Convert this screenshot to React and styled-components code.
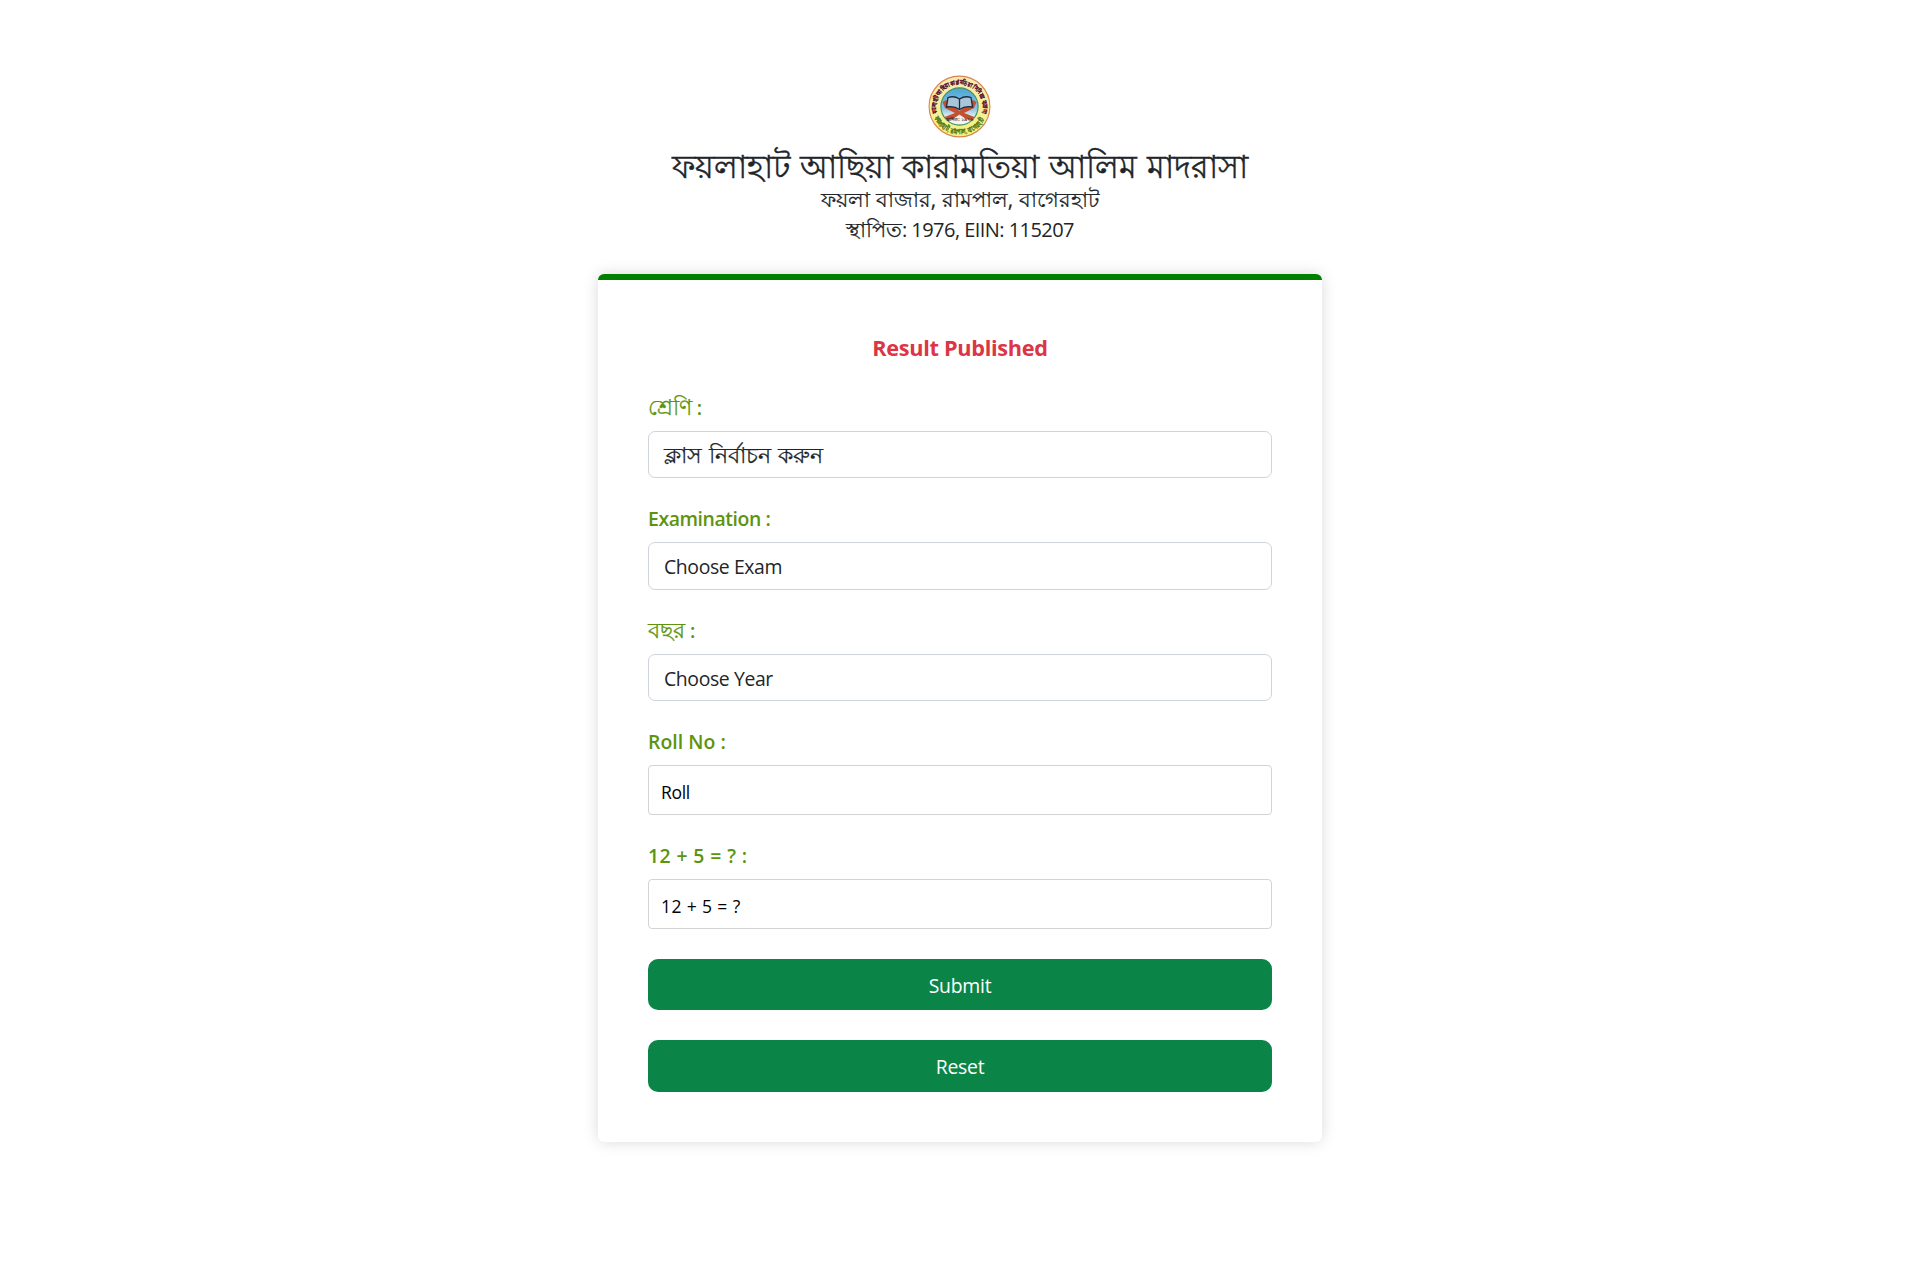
import React from "react";
import styled, { createGlobalStyle } from "styled-components";

const GlobalStyle = createGlobalStyle`
  * { box-sizing: border-box; }
  body {
    margin: 0;
    background: #fff;
    color: #212529;
    font-family: "Open Sans", "Noto Sans", sans-serif;
  }
`;

const Page = styled.main`
  display: flex;
  flex-direction: column;
  align-items: center;
  min-height: 100vh;
  padding: 75px 0 100px;
`;

const Header = styled.header`
  display: flex;
  flex-direction: column;
  align-items: center;
  height: 199px;
  white-space: nowrap;
`;

const Logo = styled.svg`
  display: block;
  width: 63px;
  height: 63px;
  flex: none;
  overflow: visible;
`;

const SchoolName = styled.h1`
  margin: 8px 0 0;
  font-size: 32.4px;
  font-weight: 400;
  line-height: 38px;
  word-spacing: 1.4px;
  -webkit-text-stroke: 0.4px currentColor;
`;

const Address = styled.p`
  margin: 0;
  font-size: 20.9px;
  line-height: 30px;
  -webkit-text-stroke: 0.2px currentColor;
`;

const Established = styled.p`
  margin: 1px 0 0;
  font-size: 20px;
  line-height: 30px;
  letter-spacing: -0.55px;
`;

const Bangla = styled.span`
  font-size: ${(p) => p.$size}px;
  font-weight: 400;
  line-height: 0;
  letter-spacing: 0;
  word-spacing: ${(p) => p.$gap || 0}px;
  -webkit-text-stroke: 0.25px currentColor;
`;

const Card = styled.section`
  width: 724px;
  padding: 51.6px 50px 50px;
  border-top: 6px solid #008000;
  border-radius: 6px;
  background: #fff;
  box-shadow: 0 0 15px rgba(0, 0, 0, 0.15);
`;

const Notice = styled.h2`
  margin: 0 0 29.2px;
  font-size: 21.7px;
  font-weight: 700;
  line-height: 32px;
  letter-spacing: -0.3px;
  text-align: center;
  color: #dc3545;
`;

const Form = styled.form`
  display: flex;
  flex-direction: column;
`;

const Field = styled.div`
  display: flex;
  flex-direction: column;
  gap: 8px;
  margin-bottom: ${(p) => p.$after || 26}px;
`;

const Label = styled.label`
  height: 30px;
  font-size: 19.4px;
  font-weight: 600;
  line-height: 30px;
  letter-spacing: ${(p) => p.$track || 0}px;
  color: #5c940d;
`;

const SelectBox = styled.div`
  height: 47.5px;
  padding: 1px 15px 0;
  border: 1px solid #ced4da;
  border-radius: 7px;
  font-size: 19.4px;
  line-height: 45px;
  letter-spacing: -0.38px;
`;

const Input = styled.input`
  width: 100%;
  height: 50px;
  padding: 3px 12px 0;
  border: 1px solid #d3d3d3;
  border-radius: 4px;
  background: #fff;
  font: 400 17.5px "Open Sans", "Noto Sans", sans-serif;
  letter-spacing: ${(p) => p.$track || 0}px;
  &::placeholder {
    color: #000;
    opacity: 1;
  }
`;

const Button = styled.button`
  height: ${(p) => (p.$last ? 52 : 51.1)}px;
  margin-bottom: ${(p) => (p.$last ? 0 : 30)}px;
  padding: 1px 0 0;
  border: 0;
  border-radius: 10px;
  background: #0b8447;
  color: #fff;
  font: 400 19.4px "Open Sans", "Noto Sans", sans-serif;
  letter-spacing: -0.25px;
`;

function Emblem() {
  return (
    <Logo viewBox="0 0 63 63" aria-label="logo">
      <defs>
        <linearGradient id="ring" x1="0" y1="0" x2="0" y2="1">
          <stop offset="0" stopColor="#fbe9b0" />
          <stop offset="0.5" stopColor="#f8ee9a" />
          <stop offset="1" stopColor="#eff57c" />
        </linearGradient>
        <linearGradient id="sky" x1="0" y1="0" x2="0" y2="1">
          <stop offset="0" stopColor="#4ba6d6" />
          <stop offset="0.55" stopColor="#86c3e4" />
          <stop offset="0.8" stopColor="#f3f4ee" />
        </linearGradient>
        <path id="topArc" d="M9.5 40 A23.2 23.2 0 1 1 53.5 40" />
        <path id="bottomArc" d="M4.6 39 A28 28 0 0 0 58.4 39" />
      </defs>
      <circle cx="31.5" cy="31.5" r="30.4" fill="url(#ring)" stroke="#d9844f" strokeWidth="1.1" />
      <circle cx="31.5" cy="31.5" r="18.6" fill="url(#sky)" stroke="#3f8f62" strokeWidth="1.1" />
      <text fontSize="6" fontWeight="700" fill="#5b1733" stroke="#5b1733" strokeWidth="0.3">
        <textPath href="#topArc" textLength="84" lengthAdjust="spacingAndGlyphs" startOffset="2">ফয়লাহাট আছিয়া কারামতিয়া সিনিয়র মাদ্রাসা</textPath>
      </text>
      <text fontSize="7" fontWeight="700" fill="#5d7a1c" stroke="#5d7a1c" strokeWidth="0.2">
        <textPath href="#bottomArc" textLength="62" lengthAdjust="spacingAndGlyphs" startOffset="4">ফয়লাহাট, রামপাল, বাগেরহাট</textPath>
      </text>
      <path d="M14.5 27 L18 25 L31.5 36 L45 25 L48.5 27 L46 33 L36 38 L46.5 42 L43.5 45 L38 44 L31.5 39.5 L25 44 L19.5 45 L16.5 42 L27 38 L17 33 Z" fill="#c4502e" />
      <path d="M20 22.5 Q26 20.5 31.5 24 Q37 20.5 43 22.5 L44.5 32 Q37 30.5 31.5 34.5 Q26 30.5 18.5 32 Z" fill="#a9c6d8" stroke="#1d2b40" strokeWidth="1.3" />
      <path d="M31.5 24 V34.5" stroke="#1d2b40" strokeWidth="1.3" />
      <text x="31.5" y="45.5" fontSize="4.6" fontWeight="700" textAnchor="middle" fill="#2d2d3d">স্থাপিত: ১৯৭৬</text>
      <circle cx="6" cy="35" r="1.5" fill="#d5482d" />
      <circle cx="57" cy="35" r="1.5" fill="#d5482d" />
    </Logo>
  );
}

export default function App() {
  return (
    <Page>
      <GlobalStyle />
      <Header>
        <Emblem />
        <SchoolName>ফয়লাহাট আছিয়া কারামতিয়া আলিম মাদরাসা</SchoolName>
        <Address>ফয়লা বাজার, রামপাল, বাগেরহাট</Address>
        <Established>
          <Bangla $size={20.9}>স্থাপিত</Bangla>: 1976, EIIN: 115207
        </Established>
      </Header>
      <Card>
        <Notice>Result Published</Notice>
        <Form onSubmit={(e) => e.preventDefault()}>
          <Field>
            <Label $track={-0.4}><Bangla $size={21.5}>শ্রেণি</Bangla> :</Label>
            <SelectBox><Bangla $size={22.4} $gap={1.2}>ক্লাস নির্বাচন করুন</Bangla></SelectBox>
          </Field>
          <Field>
            <Label $track={-0.42}>Examination :</Label>
            <SelectBox>Choose Exam</SelectBox>
          </Field>
          <Field>
            <Label><Bangla $size={22.3}>বছর</Bangla> :</Label>
            <SelectBox>Choose Year</SelectBox>
          </Field>
          <Field>
            <Label $track={0.05}>Roll No :</Label>
            <Input placeholder="Roll" $track={-0.3} />
          </Field>
          <Field $after={30}>
            <Label $track={0.4}>12 + 5 = ? :</Label>
            <Input placeholder="12 + 5 = ?" $track={0.38} />
          </Field>
          <Button type="submit">Submit</Button>
          <Button type="reset" $last>Reset</Button>
        </Form>
      </Card>
    </Page>
  );
}
